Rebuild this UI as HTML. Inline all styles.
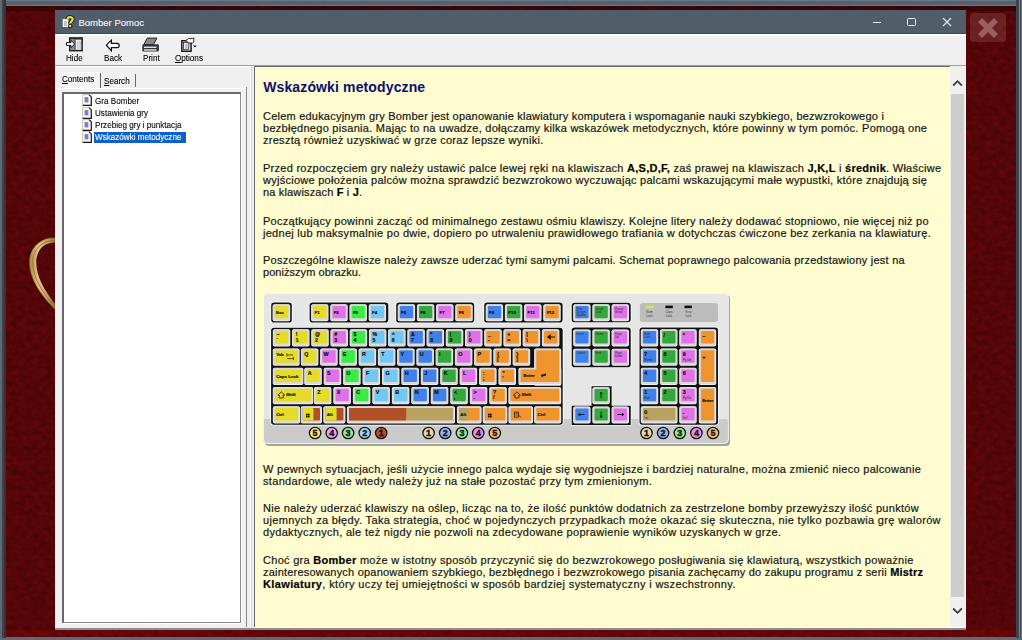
<!DOCTYPE html>
<html><head><meta charset="utf-8">
<style>
*{margin:0;padding:0;box-sizing:border-box}
html,body{width:1022px;height:640px;overflow:hidden;background:#5d6977}
body{position:relative;font-family:"Liberation Sans",sans-serif}
.a{position:absolute}
#frameT{left:0;top:0;width:1022px;height:6px;background:linear-gradient(#6b7785 0,#6b7785 1px,#55616d 1.5px,#55616d 5px,#6a7682 5.5px)}
#frameL{left:0;top:0;width:6px;height:640px;background:linear-gradient(90deg,#5e6a76 0,#5e6a76 2px,#3e4347 2.5px,#3e4347 3.5px,#3a3034 4px,#3a3034 5.5px,#4a0a0e 6px)}
#frameR{left:1016px;top:0;width:6px;height:640px;background:linear-gradient(90deg,#3a434d 0,#3a434d 3px,#7a8692 3px,#7a8692 4px,#3c4650 4px,#3c4650 5px,#6d7884 5px)}
#frameB{left:0;top:637.6px;width:1022px;height:2.4px;background:#5f6a76}
#red{left:6px;top:6px;width:1010px;height:631px;background:#5e0208;overflow:hidden}
#win{left:55px;top:10px;width:911px;height:620px;background:#f0f0f0}
#title{left:0;top:0;width:911px;height:24px;background:linear-gradient(#525d6a 0,#525d6a 22.8px,#3f4955 23.2px,#3f4955 24px);color:#eef2f8;font-size:9.5px}
#tb{left:0;top:24px;width:911px;height:31px;background:linear-gradient(#fafafa 0,#fdfdfd 1.8px,#efefef 2.2px)}
.tbl{font-size:9px;line-height:12px;color:#000;top:18.2px;white-space:pre;-webkit-text-stroke:0.1px;transform:scaleX(0.9);transform-origin:0 0}
#sep{left:0;top:54.5px;width:911px;height:1px;background:#a0a0a0}
#sep2{left:0;top:55.5px;width:911px;height:1px;background:#fff}
#tree{left:7px;top:82px;width:179px;height:531px;background:#fff;border-top:2px solid #696969;border-left:2px solid #696969;border-right:1px solid #8c8c8c;border-bottom:1.3px solid #8c8c8c;box-shadow:1px 1px 0 #fff}
.ti{font-size:9px;line-height:12px;color:#000;white-space:pre;-webkit-text-stroke:0.1px;transform:scaleX(0.9);transform-origin:0 0}
.tab{font-size:9px;line-height:12px;color:#000;white-space:pre;-webkit-text-stroke:0.1px;transform:scaleX(0.9);transform-origin:0 0}
#content{left:199px;top:56px;width:696px;height:560.6px;background:#fffcd0;border-top:1px solid #6a6a6a;border-left:1px solid #6a6a6a}
#sb{left:895.5px;top:56px;width:13px;height:561px;background:#f0f0f0}
#thumb{left:0.5px;top:27.5px;width:12.5px;height:503.5px;background:#cdcdcd}
.p{position:absolute;left:8px;font-size:11px;line-height:12px;color:#161616;white-space:pre;-webkit-text-stroke:0.2px #161616}
.p b{font-weight:bold;color:#000}
</style></head><body>
<div id="frameT" class="a"></div>
<div id="frameL" class="a"></div>
<div id="frameR" class="a"></div>
<div id="frameB" class="a"></div>
<div id="red" class="a">
  <svg class="a" style="left:0;top:0" width="1011" height="631" viewBox="0 0 1011 631">
    <defs><filter id="tex" x="0" y="0" width="100%" height="100%" color-interpolation-filters="sRGB"><feTurbulence type="fractalNoise" baseFrequency="0.15 0.2" numOctaves="3" seed="7"/><feColorMatrix type="matrix" values="0.17 0 0 0 0.245  0.02 0 0 0 0.012  0.02 0 0 0 0.02  0 0 0 0 1"/></filter></defs>
    <rect width="1011" height="631" fill="#5a0508"/>
    <rect width="1011" height="631" fill="#000" filter="url(#tex)"/>
    <rect width="1011" height="5" fill="#000" opacity="0.3"/>
    <rect y="624" width="1011" height="7" fill="#c01018" opacity="0.14"/>
  </svg>
  <svg class="a" style="left:0;top:0" width="60" height="320" viewBox="6 6 60 320">
    <defs><linearGradient id="gold" x1="0" x2="1" y1="0" y2="0"><stop offset="0" stop-color="#a8833e"/><stop offset="0.35" stop-color="#e2c688"/><stop offset="0.7" stop-color="#c9a45a"/><stop offset="1" stop-color="#8f6a2c"/></linearGradient></defs>
    <path d="M55,237.7 C41,237 29,248 29.2,262 C29.5,280 42,296 55,309.5 L55,304 C45,291 36.2,277 36.2,262 C36.5,250 44,242.5 55,242.6 Z" fill="url(#gold)"/>
    <path d="M55,240.3 C42,240 32.6,250 32.7,262 C33,279 43.5,294 55,306.8" fill="none" stroke="#86652e" stroke-width="0.9" opacity="0.8"/><path d="M55,237.9 C41,237.2 29.4,248 29.4,262 C29.7,280 42,296 55,309.3" fill="none" stroke="#6a4a1c" stroke-width="0.6" opacity="0.7"/>
  </svg>
  <div class="a" style="left:964.4px;top:6.7px;width:35.2px;height:29.7px;border-radius:4px;background:rgba(255,215,215,0.13)"></div>
  <svg class="a" style="left:971px;top:11px" width="22" height="22" viewBox="0 0 22 22"><path d="M3 3L19 19M19 3L3 19" stroke="#9c5f5f" stroke-width="5.6" stroke-linecap="butt"/></svg>
</div>

<div id="win" class="a">
  <div id="title" class="a">
    <svg class="a" style="left:6px;top:4px" width="14" height="15" viewBox="0 0 14 15">
      <rect x="1.7" y="4.9" width="5.6" height="8.1" fill="#f6f6f6"/><rect x="3" y="7" width="3" height="5" fill="#c4c4c4"/>
      <path d="M6.6 5.2 C6.6 2.6 11.6 2.4 11.6 5.2 C11.6 7.4 9.2 7.2 9.2 9.4" fill="none" stroke="#111" stroke-width="4"/>
      <path d="M6.6 5.2 C6.6 2.6 11.6 2.4 11.6 5.2 C11.6 7.4 9.2 7.2 9.2 9.4" fill="none" stroke="#e6e03a" stroke-width="2.3"/>
      <circle cx="9.4" cy="12.2" r="2.1" fill="#111"/><circle cx="9.2" cy="12" r="1.25" fill="#e6e03a"/>
    </svg>
    <div class="a" style="left:23.5px;top:7.1px;white-space:pre;-webkit-text-stroke:0.15px #eef2f8">Bomber Pomoc</div>
    <div class="a" style="left:817.5px;top:11.9px;width:8px;height:1.2px;background:#e6ebf0"></div>
    <div class="a" style="left:852px;top:7.7px;width:8.8px;height:8.4px;border:1.2px solid #e6ebf0;border-radius:1.5px"></div>
    <svg class="a" style="left:887px;top:6.5px" width="10" height="10" viewBox="0 0 10 10"><path d="M1 1L9 9M9 1L1 9" stroke="#e6ebf0" stroke-width="1.1"/></svg>
  </div>
  <div id="tb" class="a">
    <svg class="a" style="left:10px;top:2px" width="20" height="17" viewBox="0 0 20 17">
      <rect x="4.8" y="2" width="12.3" height="12.6" fill="#fff" stroke="#1e1e1e" stroke-width="1.6"/>
      <rect x="4.8" y="2" width="12.3" height="1.6" fill="#2a2a2a"/>
      <rect x="5.6" y="3.6" width="4.2" height="10.2" fill="#8a8a8a"/><rect x="9.6" y="3.6" width="1" height="10.2" fill="#222"/>
      <rect x="11.8" y="4.6" width="4.3" height="8.6" fill="#c8c8c8"/><rect x="13.4" y="4.6" width="1" height="8.6" fill="#e8e8e8"/>
      <path d="M1.4 6.6h4.6v-2.3l3.6 3.7-3.6 3.7v-2.3h-4.6z" fill="#fff" stroke="#111" stroke-width="1" stroke-linejoin="miter"/>
    </svg>
    <svg class="a" style="left:50px;top:4.5px" width="16" height="13" viewBox="0 0 16 13">
      <path d="M1.4 6.2L6.4 1.2v3.1h5.6a2.2 2.2 0 0 1 0 4.4h-5.6v3.1z" fill="#fff" stroke="#111" stroke-width="1.2" stroke-linejoin="miter"/>
    </svg>
    <svg class="a" style="left:87px;top:3px" width="18" height="16" viewBox="0 0 18 16">
      <path d="M5.3 1.1h9.6l-3.4 6.4h-9.6z" fill="#8a8a8a" stroke="#222" stroke-width="1"/>
      <path d="M1.5 7.2h14a1.4 1.4 0 0 1 1.4 1.4v4.6a1.4 1.4 0 0 1-1.4 1.4h-14a1.2 1.2 0 0 1-1.2-1.2v-5a1.2 1.2 0 0 1 1.2-1.2z" fill="#333"/>
      <rect x="2" y="9.6" width="12.5" height="1.3" fill="#f4f4f4"/><rect x="2" y="12.3" width="12.5" height="1.3" fill="#f4f4f4"/>
    </svg>
    <svg class="a" style="left:125px;top:2.5px" width="18" height="16" viewBox="0 0 18 16">
      <rect x="1.8" y="3.7" width="9.3" height="10.6" fill="#c8c8c8" stroke="#151515" stroke-width="1.4"/>
      <rect x="3.6" y="5.6" width="4.6" height="7" fill="#fff" stroke="#222" stroke-width="0.7"/>
      <rect x="4.8" y="6.4" width="0.7" height="5.6" fill="#999"/><rect x="6.4" y="6.4" width="0.7" height="5.6" fill="#999"/>
      <path d="M5.6 3.6L8.4 1.6H12.6L13.8 0.8V5L12.4 6H8.8Z" fill="#fff" stroke="#151515" stroke-width="0.9" stroke-linejoin="round"/>
      <path d="M13 8.6h3.8l-1.9 1.9z" fill="#111"/>
    </svg>
    <div class="a tbl" style="left:11.3px">Hide</div>
    <div class="a tbl" style="left:48.8px">Back</div>
    <div class="a tbl" style="left:88.4px">Print</div>
    <div class="a tbl" style="left:120px"><u>O</u>ptions</div>
  </div>
  <div id="sep" class="a"></div>
  <div id="sep2" class="a"></div>
  <div class="a" style="left:6px;top:62px;width:39px;height:16px;background:#f4f4f4;border-top:1px solid #fff"></div>
  <div class="a tab" style="left:7px;top:62.8px"><u>C</u>ontents</div>
  <div class="a" style="left:45px;top:62.6px;width:1.2px;height:15px;background:#5a5a5a"></div>
  <div class="a tab" style="left:49.3px;top:64.6px"><u>S</u>earch</div>
  <div class="a" style="left:79.5px;top:64.4px;width:1.2px;height:12.3px;background:#6a6a6a"></div>
  <div class="a" style="left:2px;top:77.5px;width:190px;height:1px;background:#fff"></div>
  <div class="a" style="left:190.8px;top:77px;width:1.2px;height:540px;background:#8a8a8a"></div>
  <div class="a" style="left:195px;top:56px;width:1px;height:564px;background:#fff"></div>
  <div class="a" style="left:196px;top:56px;width:1px;height:564px;background:#d6d6d6"></div>
  <div class="a" style="left:199px;top:616.6px;width:712px;height:1.2px;background:#fdfdfd"></div>
  <div class="a" style="left:0px;top:617.8px;width:911px;height:2.2px;background:#8a8e94"></div>
  <div id="tree" class="a">
<svg class="a" style="left:18.2px;top:0.10px" width="10" height="12" viewBox="0 0 10 12"><path d="M0.7 0.6h6.3l2.3 2.3v8.5h-8.6z" fill="#fcfcf4" stroke="#c9c7a4" stroke-width="1"/><path d="M7 0.6l2.3 2.3v8.5h-8.6" fill="none" stroke="#1a1a1a" stroke-width="1.2"/><rect x="2.6" y="3.1" width="3.8" height="5.3" fill="#7b78e6"/></svg>
<svg class="a" style="left:18.2px;top:12.50px" width="10" height="12" viewBox="0 0 10 12"><path d="M0.7 0.6h6.3l2.3 2.3v8.5h-8.6z" fill="#fcfcf4" stroke="#c9c7a4" stroke-width="1"/><path d="M7 0.6l2.3 2.3v8.5h-8.6" fill="none" stroke="#1a1a1a" stroke-width="1.2"/><rect x="2.6" y="3.1" width="3.8" height="5.3" fill="#7b78e6"/></svg>
<svg class="a" style="left:18.2px;top:24.90px" width="10" height="12" viewBox="0 0 10 12"><path d="M0.7 0.6h6.3l2.3 2.3v8.5h-8.6z" fill="#fcfcf4" stroke="#c9c7a4" stroke-width="1"/><path d="M7 0.6l2.3 2.3v8.5h-8.6" fill="none" stroke="#1a1a1a" stroke-width="1.2"/><rect x="2.6" y="3.1" width="3.8" height="5.3" fill="#7b78e6"/></svg>
<svg class="a" style="left:18.2px;top:37.30px" width="10" height="12" viewBox="0 0 10 12"><path d="M0.7 0.6h6.3l2.3 2.3v8.5h-8.6z" fill="#fcfcf4" stroke="#c9c7a4" stroke-width="1"/><path d="M7 0.6l2.3 2.3v8.5h-8.6" fill="none" stroke="#1a1a1a" stroke-width="1.2"/><rect x="2.6" y="3.1" width="3.8" height="5.3" fill="#7b78e6"/></svg>
    <div class="a ti" style="left:31px;top:0.5px">Gra Bomber</div>
    <div class="a ti" style="left:31px;top:12.9px">Ustawienia gry</div>
    <div class="a ti" style="left:31px;top:25.3px">Przebieg gry i punktacja</div>
    <div class="a" style="left:30.4px;top:37.7px;height:11.7px;width:92.1px;background:#0c60c8"></div><div class="a ti" style="left:31px;top:37.7px;line-height:11.7px;color:#fff">Wskazówki metodyczne</div>
  </div>
  <div id="content" class="a">
<div class="a" style="left:8.2px;top:12px;font-size:14px;font-weight:bold;color:#0d0d6e;letter-spacing:0.13px;white-space:pre">Wskazówki metodyczne</div>
<div class="p" style="top:43.39px;letter-spacing:0.217px">Celem edukacyjnym gry Bomber jest opanowanie klawiatury komputera i wspomaganie nauki szybkiego, bezwzrokowego i</div>
<div class="p" style="top:55.24px;letter-spacing:0.276px">bezbłędnego pisania. Mając to na uwadze, dołączamy kilka wskazówek metodycznych, które powinny w tym pomóc. Pomogą one</div>
<div class="p" style="top:67.09px;letter-spacing:0.275px">zresztą również uzyskiwać w grze coraz lepsze wyniki.</div>
<div class="p" style="top:95.39px;letter-spacing:0.270px">Przed rozpoczęciem gry należy ustawić palce lewej ręki na klawiszach <b>A,S,D,F,</b> zaś prawej na klawiszach <b>J,K,L</b> i <b>średnik</b>. Właściwe</div>
<div class="p" style="top:107.39px;letter-spacing:0.267px">wyjściowe położenia palców można sprawdzić bezwzrokowo wyczuwając palcami wskazującymi małe wypustki, które znajdują się</div>
<div class="p" style="top:119.39px;letter-spacing:0.156px">na klawiszach <b>F</b> i <b>J</b>.</div>
<div class="p" style="top:147.79px;letter-spacing:0.266px">Początkujący powinni zacząć od minimalnego zestawu ośmiu klawiszy. Kolejne litery należy dodawać stopniowo, nie więcej niż po</div>
<div class="p" style="top:159.79px;letter-spacing:0.279px">jednej lub maksymalnie po dwie, dopiero po utrwaleniu prawidłowego trafiania w dotychczas ćwiczone bez zerkania na klawiaturę.</div>
<div class="p" style="top:187.19px;letter-spacing:0.231px">Poszczególne klawisze należy zawsze uderzać tymi samymi palcami. Schemat poprawnego palcowania przedstawiony jest na</div>
<div class="p" style="top:199.19px;letter-spacing:0.046px">poniższym obrazku.</div>
<div class="p" style="top:395.99px;letter-spacing:0.283px">W pewnych sytuacjach, jeśli użycie innego palca wydaje się wygodniejsze i bardziej naturalne, można zmienić nieco palcowanie</div>
<div class="p" style="top:407.99px;letter-spacing:0.326px">standardowe, ale wtedy należy już na stałe pozostać przy tym zmienionym.</div>
<div class="p" style="top:434.89px;letter-spacing:0.290px">Nie należy uderzać klawiszy na oślep, licząc na to, że ilość punktów dodatnich za zestrzelone bomby przewyższy ilość punktów</div>
<div class="p" style="top:446.89px;letter-spacing:0.337px">ujemnych za błędy. Taka strategia, choć w pojedynczych przypadkach może okazać się skuteczna, nie tylko pozbawia grę walorów</div>
<div class="p" style="top:458.89px;letter-spacing:0.311px">dydaktycznych, ale też nigdy nie pozwoli na zdecydowane poprawienie wyników uzyskanych w grze.</div>
<div class="p" style="top:487.39px;letter-spacing:0.286px">Choć gra <b>Bomber</b> może w istotny sposób przyczynić się do bezwzrokowego posługiwania się klawiaturą, wszystkich poważnie</div>
<div class="p" style="top:499.39px;letter-spacing:0.209px">zainteresowanych opanowaniem szybkiego, bezbłędnego i bezwzrokowego pisania zachęcamy do zakupu programu z serii <b>Mistrz</b></div>
<div class="p" style="top:511.39px;letter-spacing:0.371px"><b>Klawiatury</b>, który uczy tej umiejętności w sposób bardziej systematyczny i wszechstronny.</div>
<svg class="a" style="left:8px;top:226px;font-family:'Liberation Sans',sans-serif" width="472" height="156" viewBox="263 293 472 156">
<rect x="265" y="295" width="465" height="151" rx="4" fill="#a2a2a2"/>
<rect x="263.4" y="293.4" width="465" height="150" rx="4" fill="#e6e6e6"/>
<rect x="263.4" y="419" width="465" height="24.4" rx="3" fill="#cbcbcb"/>
<rect x="263.4" y="293.4" width="465" height="150" rx="4" fill="none" stroke="#fafafa" stroke-width="0.8"/>
<rect x="270.4" y="301.8" width="22.200000000000024" height="21.49999999999998" rx="3.5" fill="#fff"/>
<rect x="271.2" y="302.6" width="20.600000000000023" height="19.899999999999977" rx="2.8" fill="#111"/>
<rect x="308.8" y="301.8" width="80.29999999999998" height="21.49999999999998" rx="3.5" fill="#fff"/>
<rect x="309.6" y="302.6" width="78.69999999999999" height="19.899999999999977" rx="2.8" fill="#111"/>
<rect x="395.4" y="301.8" width="79.6" height="21.49999999999998" rx="3.5" fill="#fff"/>
<rect x="396.2" y="302.6" width="78.0" height="19.899999999999977" rx="2.8" fill="#111"/>
<rect x="483.4" y="301.8" width="80.00000000000003" height="21.49999999999998" rx="3.5" fill="#fff"/>
<rect x="484.2" y="302.6" width="78.40000000000003" height="19.899999999999977" rx="2.8" fill="#111"/>
<rect x="570.9000000000001" y="302.0" width="60.6" height="21.1" rx="3.5" fill="#fff"/>
<rect x="571.7" y="302.8" width="59.0" height="19.5" rx="2.8" fill="#111"/>
<rect x="270.3" y="327.0" width="293.20000000000005" height="98.6" rx="3.5" fill="#fff"/>
<rect x="271.1" y="327.8" width="291.6" height="97.0" rx="2.8" fill="#111"/>
<rect x="570.9000000000001" y="326.8" width="60.6" height="41.19999999999997" rx="3.5" fill="#fff"/>
<rect x="571.7" y="327.6" width="59.0" height="39.599999999999966" rx="2.8" fill="#111"/>
<rect x="638.7" y="326.8" width="80.1" height="98.79999999999998" rx="3.5" fill="#fff"/>
<rect x="639.5" y="327.6" width="78.5" height="97.19999999999999" rx="2.8" fill="#111"/>
<path d="M590.8 385.5h21.6v19.5h19.1v20.7h-60.6v-20.7h19.9z" fill="#fff"/>
<path d="M591.6 386.3h20v19.5h19.1v19.1h-59v-19.1h19.9z" fill="#111" stroke="#111" stroke-width="0.1" stroke-linejoin="round"/>
<rect x="639.8" y="303" width="78.2" height="19.1" rx="3" fill="#bdbdbd"/>
<rect x="645.6" y="305.6" width="7.8" height="2.6" fill="#d2ee3c"/><rect x="665.4" y="305.6" width="7.4" height="2.6" fill="#111"/><rect x="684.5" y="305.6" width="7.4" height="2.6" fill="#111"/>
<text x="649.5" y="313.2" font-size="3" text-anchor="middle" fill="#333">Num</text><text x="649.5" y="316.8" font-size="3" text-anchor="middle" fill="#333">Lock</text>
<text x="668.9" y="313.2" font-size="3" text-anchor="middle" fill="#333">Caps</text><text x="668.9" y="316.8" font-size="3" text-anchor="middle" fill="#333">Lock</text>
<text x="688.3" y="313.2" font-size="3" text-anchor="middle" fill="#333">Scro</text><text x="688.3" y="316.8" font-size="3" text-anchor="middle" fill="#333">Lock</text>
<rect x="272.60" y="304.30" width="17.60" height="16.90" rx="1.8" fill="#f4f4f4"/>
<rect x="272.90" y="304.50" width="16.70" height="15.90" rx="1.6" fill="#d9d9d9"/>
<rect x="274.70" y="306.10" width="13.50" height="12.10" rx="1" fill="#e5dc28"/>
<text x="276.00" y="314.30" font-size="4.4" font-weight="bold" fill="#151515" stroke="#151515" stroke-width="0.2">Esc</text>
<rect x="311.10" y="304.30" width="17.40" height="16.90" rx="1.8" fill="#f4f4f4"/>
<rect x="311.40" y="304.50" width="16.50" height="15.90" rx="1.6" fill="#d9d9d9"/>
<rect x="313.20" y="306.10" width="13.30" height="12.10" rx="1" fill="#e5dc28"/>
<text x="314.50" y="314.30" font-size="4.4" font-weight="bold" fill="#151515" stroke="#151515" stroke-width="0.2">F1</text>
<rect x="330.30" y="304.30" width="17.40" height="16.90" rx="1.8" fill="#f4f4f4"/>
<rect x="330.60" y="304.50" width="16.50" height="15.90" rx="1.6" fill="#d9d9d9"/>
<rect x="332.40" y="306.10" width="13.30" height="12.10" rx="1" fill="#e271e9"/>
<text x="333.70" y="314.30" font-size="4.4" font-weight="bold" fill="#151515" stroke="#151515" stroke-width="0.2">F2</text>
<rect x="349.50" y="304.30" width="17.40" height="16.90" rx="1.8" fill="#f4f4f4"/>
<rect x="349.80" y="304.50" width="16.50" height="15.90" rx="1.6" fill="#d9d9d9"/>
<rect x="351.60" y="306.10" width="13.30" height="12.10" rx="1" fill="#38ec44"/>
<text x="352.90" y="314.30" font-size="4.4" font-weight="bold" fill="#151515" stroke="#151515" stroke-width="0.2">F3</text>
<rect x="368.70" y="304.30" width="17.40" height="16.90" rx="1.8" fill="#f4f4f4"/>
<rect x="369.00" y="304.50" width="16.50" height="15.90" rx="1.6" fill="#d9d9d9"/>
<rect x="370.80" y="306.10" width="13.30" height="12.10" rx="1" fill="#72c8f2"/>
<text x="372.10" y="314.30" font-size="4.4" font-weight="bold" fill="#151515" stroke="#151515" stroke-width="0.2">F4</text>
<rect x="397.70" y="304.30" width="17.40" height="16.90" rx="1.8" fill="#f4f4f4"/>
<rect x="398.00" y="304.50" width="16.50" height="15.90" rx="1.6" fill="#d9d9d9"/>
<rect x="399.80" y="306.10" width="13.30" height="12.10" rx="1" fill="#4080ea"/>
<text x="401.10" y="314.30" font-size="4.4" font-weight="bold" fill="#151515" stroke="#151515" stroke-width="0.2">F5</text>
<rect x="416.90" y="304.30" width="17.40" height="16.90" rx="1.8" fill="#f4f4f4"/>
<rect x="417.20" y="304.50" width="16.50" height="15.90" rx="1.6" fill="#d9d9d9"/>
<rect x="419.00" y="306.10" width="13.30" height="12.10" rx="1" fill="#33a93b"/>
<text x="420.30" y="314.30" font-size="4.4" font-weight="bold" fill="#151515" stroke="#151515" stroke-width="0.2">F6</text>
<rect x="436.10" y="304.30" width="17.40" height="16.90" rx="1.8" fill="#f4f4f4"/>
<rect x="436.40" y="304.50" width="16.50" height="15.90" rx="1.6" fill="#d9d9d9"/>
<rect x="438.20" y="306.10" width="13.30" height="12.10" rx="1" fill="#e271e9"/>
<text x="439.50" y="314.30" font-size="4.4" font-weight="bold" fill="#151515" stroke="#151515" stroke-width="0.2">F7</text>
<rect x="455.30" y="304.30" width="17.40" height="16.90" rx="1.8" fill="#f4f4f4"/>
<rect x="455.60" y="304.50" width="16.50" height="15.90" rx="1.6" fill="#d9d9d9"/>
<rect x="457.40" y="306.10" width="13.30" height="12.10" rx="1" fill="#f0952e"/>
<text x="458.70" y="314.30" font-size="4.4" font-weight="bold" fill="#151515" stroke="#151515" stroke-width="0.2">F8</text>
<rect x="485.70" y="304.30" width="17.40" height="16.90" rx="1.8" fill="#f4f4f4"/>
<rect x="486.00" y="304.50" width="16.50" height="15.90" rx="1.6" fill="#d9d9d9"/>
<rect x="487.80" y="306.10" width="13.30" height="12.10" rx="1" fill="#4080ea"/>
<text x="489.10" y="314.30" font-size="4.4" font-weight="bold" fill="#151515" stroke="#151515" stroke-width="0.2">F9</text>
<rect x="504.90" y="304.30" width="17.40" height="16.90" rx="1.8" fill="#f4f4f4"/>
<rect x="505.20" y="304.50" width="16.50" height="15.90" rx="1.6" fill="#d9d9d9"/>
<rect x="507.00" y="306.10" width="13.30" height="12.10" rx="1" fill="#33a93b"/>
<text x="508.30" y="314.30" font-size="4.4" font-weight="bold" fill="#151515" stroke="#151515" stroke-width="0.2">F10</text>
<rect x="524.10" y="304.30" width="17.40" height="16.90" rx="1.8" fill="#f4f4f4"/>
<rect x="524.40" y="304.50" width="16.50" height="15.90" rx="1.6" fill="#d9d9d9"/>
<rect x="526.20" y="306.10" width="13.30" height="12.10" rx="1" fill="#e271e9"/>
<text x="527.50" y="314.30" font-size="4.4" font-weight="bold" fill="#151515" stroke="#151515" stroke-width="0.2">F11</text>
<rect x="543.30" y="304.30" width="17.40" height="16.90" rx="1.8" fill="#f4f4f4"/>
<rect x="543.60" y="304.50" width="16.50" height="15.90" rx="1.6" fill="#d9d9d9"/>
<rect x="545.40" y="306.10" width="13.30" height="12.10" rx="1" fill="#f0952e"/>
<text x="546.70" y="314.30" font-size="4.4" font-weight="bold" fill="#151515" stroke="#151515" stroke-width="0.2">F12</text>
<rect x="573.20" y="304.30" width="17.40" height="16.90" rx="1.8" fill="#f4f4f4"/>
<rect x="573.50" y="304.50" width="16.50" height="15.90" rx="1.6" fill="#d9d9d9"/>
<rect x="575.30" y="306.10" width="13.30" height="12.10" rx="1" fill="#4080ea"/>
<text x="576.50" y="309.70" font-size="3" fill="#2a2a2a">Print</text>
<text x="576.50" y="312.90" font-size="3" fill="#2a2a2a">Screen</text>
<text x="576.50" y="316.10" font-size="3" fill="#2a2a2a">SysRq</text>
<rect x="592.40" y="304.30" width="17.40" height="16.90" rx="1.8" fill="#f4f4f4"/>
<rect x="592.70" y="304.50" width="16.50" height="15.90" rx="1.6" fill="#d9d9d9"/>
<rect x="594.50" y="306.10" width="13.30" height="12.10" rx="1" fill="#33a93b"/>
<text x="595.70" y="309.70" font-size="3" fill="#2a2a2a">Scroll</text>
<text x="595.70" y="312.90" font-size="3" fill="#2a2a2a">Lock</text>
<rect x="611.60" y="304.30" width="17.40" height="16.90" rx="1.8" fill="#f4f4f4"/>
<rect x="611.90" y="304.50" width="16.50" height="15.90" rx="1.6" fill="#d9d9d9"/>
<rect x="613.70" y="306.10" width="13.30" height="12.10" rx="1" fill="#e271e9"/>
<text x="614.90" y="309.70" font-size="3" fill="#2a2a2a">Pause</text>
<text x="614.90" y="312.90" font-size="3" fill="#2a2a2a">Break</text>
<rect x="272.80" y="329.20" width="17.50" height="17.30" rx="1.8" fill="#f4f4f4"/>
<rect x="273.10" y="329.40" width="16.60" height="16.30" rx="1.6" fill="#d9d9d9"/>
<rect x="274.90" y="331.00" width="13.40" height="12.50" rx="1" fill="#e5dc28"/>
<text x="276.50" y="336.20" font-size="5.2" font-weight="bold" fill="#151515" stroke="#151515" stroke-width="0.2">~</text>
<text x="276.50" y="341.60" font-size="5.2" font-weight="bold" fill="#151515" stroke="#151515" stroke-width="0.2">`</text>
<rect x="292.02" y="329.20" width="17.50" height="17.30" rx="1.8" fill="#f4f4f4"/>
<rect x="292.32" y="329.40" width="16.60" height="16.30" rx="1.6" fill="#d9d9d9"/>
<rect x="294.12" y="331.00" width="13.40" height="12.50" rx="1" fill="#e5dc28"/>
<text x="295.72" y="336.20" font-size="5.2" font-weight="bold" fill="#151515" stroke="#151515" stroke-width="0.2">!</text>
<text x="295.72" y="341.60" font-size="5.2" font-weight="bold" fill="#151515" stroke="#151515" stroke-width="0.2">1</text>
<rect x="311.24" y="329.20" width="17.50" height="17.30" rx="1.8" fill="#f4f4f4"/>
<rect x="311.54" y="329.40" width="16.60" height="16.30" rx="1.6" fill="#d9d9d9"/>
<rect x="313.34" y="331.00" width="13.40" height="12.50" rx="1" fill="#e5dc28"/>
<text x="314.94" y="336.20" font-size="5.2" font-weight="bold" fill="#151515" stroke="#151515" stroke-width="0.2">@</text>
<text x="314.94" y="341.60" font-size="5.2" font-weight="bold" fill="#151515" stroke="#151515" stroke-width="0.2">2</text>
<rect x="330.46" y="329.20" width="17.50" height="17.30" rx="1.8" fill="#f4f4f4"/>
<rect x="330.76" y="329.40" width="16.60" height="16.30" rx="1.6" fill="#d9d9d9"/>
<rect x="332.56" y="331.00" width="13.40" height="12.50" rx="1" fill="#e271e9"/>
<text x="334.16" y="336.20" font-size="5.2" font-weight="bold" fill="#151515" stroke="#151515" stroke-width="0.2">#</text>
<text x="334.16" y="341.60" font-size="5.2" font-weight="bold" fill="#151515" stroke="#151515" stroke-width="0.2">3</text>
<rect x="349.68" y="329.20" width="17.50" height="17.30" rx="1.8" fill="#f4f4f4"/>
<rect x="349.98" y="329.40" width="16.60" height="16.30" rx="1.6" fill="#d9d9d9"/>
<rect x="351.78" y="331.00" width="13.40" height="12.50" rx="1" fill="#38ec44"/>
<text x="353.38" y="336.20" font-size="5.2" font-weight="bold" fill="#151515" stroke="#151515" stroke-width="0.2">$</text>
<text x="353.38" y="341.60" font-size="5.2" font-weight="bold" fill="#151515" stroke="#151515" stroke-width="0.2">4</text>
<rect x="368.90" y="329.20" width="17.50" height="17.30" rx="1.8" fill="#f4f4f4"/>
<rect x="369.20" y="329.40" width="16.60" height="16.30" rx="1.6" fill="#d9d9d9"/>
<rect x="371.00" y="331.00" width="13.40" height="12.50" rx="1" fill="#72c8f2"/>
<text x="372.60" y="336.20" font-size="5.2" font-weight="bold" fill="#151515" stroke="#151515" stroke-width="0.2">%</text>
<text x="372.60" y="341.60" font-size="5.2" font-weight="bold" fill="#151515" stroke="#151515" stroke-width="0.2">5</text>
<rect x="388.12" y="329.20" width="17.50" height="17.30" rx="1.8" fill="#f4f4f4"/>
<rect x="388.42" y="329.40" width="16.60" height="16.30" rx="1.6" fill="#d9d9d9"/>
<rect x="390.22" y="331.00" width="13.40" height="12.50" rx="1" fill="#72c8f2"/>
<text x="391.82" y="336.20" font-size="5.2" font-weight="bold" fill="#151515" stroke="#151515" stroke-width="0.2">^</text>
<text x="391.82" y="341.60" font-size="5.2" font-weight="bold" fill="#151515" stroke="#151515" stroke-width="0.2">6</text>
<rect x="407.34" y="329.20" width="17.50" height="17.30" rx="1.8" fill="#f4f4f4"/>
<rect x="407.64" y="329.40" width="16.60" height="16.30" rx="1.6" fill="#d9d9d9"/>
<rect x="409.44" y="331.00" width="13.40" height="12.50" rx="1" fill="#4080ea"/>
<text x="411.04" y="336.20" font-size="5.2" font-weight="bold" fill="#151515" stroke="#151515" stroke-width="0.2">&amp;</text>
<text x="411.04" y="341.60" font-size="5.2" font-weight="bold" fill="#151515" stroke="#151515" stroke-width="0.2">7</text>
<rect x="426.56" y="329.20" width="17.50" height="17.30" rx="1.8" fill="#f4f4f4"/>
<rect x="426.86" y="329.40" width="16.60" height="16.30" rx="1.6" fill="#d9d9d9"/>
<rect x="428.66" y="331.00" width="13.40" height="12.50" rx="1" fill="#4080ea"/>
<text x="430.26" y="336.20" font-size="5.2" font-weight="bold" fill="#151515" stroke="#151515" stroke-width="0.2">*</text>
<text x="430.26" y="341.60" font-size="5.2" font-weight="bold" fill="#151515" stroke="#151515" stroke-width="0.2">8</text>
<rect x="445.78" y="329.20" width="17.50" height="17.30" rx="1.8" fill="#f4f4f4"/>
<rect x="446.08" y="329.40" width="16.60" height="16.30" rx="1.6" fill="#d9d9d9"/>
<rect x="447.88" y="331.00" width="13.40" height="12.50" rx="1" fill="#33a93b"/>
<text x="449.48" y="336.20" font-size="5.2" font-weight="bold" fill="#151515" stroke="#151515" stroke-width="0.2">(</text>
<text x="449.48" y="341.60" font-size="5.2" font-weight="bold" fill="#151515" stroke="#151515" stroke-width="0.2">9</text>
<rect x="465.00" y="329.20" width="17.50" height="17.30" rx="1.8" fill="#f4f4f4"/>
<rect x="465.30" y="329.40" width="16.60" height="16.30" rx="1.6" fill="#d9d9d9"/>
<rect x="467.10" y="331.00" width="13.40" height="12.50" rx="1" fill="#e271e9"/>
<text x="468.70" y="336.20" font-size="5.2" font-weight="bold" fill="#151515" stroke="#151515" stroke-width="0.2">)</text>
<text x="468.70" y="341.60" font-size="5.2" font-weight="bold" fill="#151515" stroke="#151515" stroke-width="0.2">0</text>
<rect x="484.22" y="329.20" width="17.50" height="17.30" rx="1.8" fill="#f4f4f4"/>
<rect x="484.52" y="329.40" width="16.60" height="16.30" rx="1.6" fill="#d9d9d9"/>
<rect x="486.32" y="331.00" width="13.40" height="12.50" rx="1" fill="#f0952e"/>
<text x="487.92" y="336.20" font-size="5.2" font-weight="bold" fill="#151515" stroke="#151515" stroke-width="0.2">_</text>
<text x="487.92" y="341.60" font-size="5.2" font-weight="bold" fill="#151515" stroke="#151515" stroke-width="0.2">-</text>
<rect x="503.44" y="329.20" width="17.50" height="17.30" rx="1.8" fill="#f4f4f4"/>
<rect x="503.74" y="329.40" width="16.60" height="16.30" rx="1.6" fill="#d9d9d9"/>
<rect x="505.54" y="331.00" width="13.40" height="12.50" rx="1" fill="#f0952e"/>
<text x="507.14" y="336.20" font-size="5.2" font-weight="bold" fill="#151515" stroke="#151515" stroke-width="0.2">+</text>
<text x="507.14" y="341.60" font-size="5.2" font-weight="bold" fill="#151515" stroke="#151515" stroke-width="0.2">=</text>
<rect x="522.66" y="329.20" width="17.50" height="17.30" rx="1.8" fill="#f4f4f4"/>
<rect x="522.96" y="329.40" width="16.60" height="16.30" rx="1.6" fill="#d9d9d9"/>
<rect x="524.76" y="331.00" width="13.40" height="12.50" rx="1" fill="#f0952e"/>
<text x="526.36" y="336.20" font-size="5.2" font-weight="bold" fill="#151515" stroke="#151515" stroke-width="0.2">|</text>
<text x="526.36" y="341.60" font-size="5.2" font-weight="bold" fill="#151515" stroke="#151515" stroke-width="0.2">\</text>
<rect x="541.88" y="329.20" width="17.50" height="17.30" rx="1.8" fill="#f4f4f4"/>
<rect x="542.18" y="329.40" width="16.60" height="16.30" rx="1.6" fill="#d9d9d9"/>
<rect x="543.98" y="331.00" width="13.40" height="12.50" rx="1" fill="#f0952e"/>
<path d="M547.98 337.00h7M547.98 337.00l2.2-1.8v3.6z" stroke="#151515" stroke-width="1.1" fill="#151515"/>
<rect x="272.80" y="348.50" width="26.80" height="17.30" rx="1.8" fill="#f4f4f4"/>
<rect x="273.10" y="348.70" width="25.90" height="16.30" rx="1.6" fill="#d9d9d9"/>
<rect x="274.90" y="350.30" width="22.70" height="12.50" rx="1" fill="#e5dc28"/>
<text x="276.20" y="355.90" font-size="4.4" font-weight="bold" fill="#151515" stroke="#151515" stroke-width="0.2">Tab</text>
<path d="M286.90 353.50v3M287.20 355.00h6M293.50 357.10v3M287.20 358.60h6" stroke="#151515" stroke-width="0.7"/>
<rect x="300.90" y="348.50" width="17.50" height="17.30" rx="1.8" fill="#f4f4f4"/>
<rect x="301.20" y="348.70" width="16.60" height="16.30" rx="1.6" fill="#d9d9d9"/>
<rect x="303.00" y="350.30" width="13.40" height="12.50" rx="1" fill="#e5dc28"/>
<text x="304.30" y="355.90" font-size="5.4" font-weight="bold" fill="#151515" stroke="#151515" stroke-width="0.2">Q</text>
<rect x="320.15" y="348.50" width="17.50" height="17.30" rx="1.8" fill="#f4f4f4"/>
<rect x="320.45" y="348.70" width="16.60" height="16.30" rx="1.6" fill="#d9d9d9"/>
<rect x="322.25" y="350.30" width="13.40" height="12.50" rx="1" fill="#e271e9"/>
<text x="323.55" y="355.90" font-size="5.4" font-weight="bold" fill="#151515" stroke="#151515" stroke-width="0.2">W</text>
<rect x="339.40" y="348.50" width="17.50" height="17.30" rx="1.8" fill="#f4f4f4"/>
<rect x="339.70" y="348.70" width="16.60" height="16.30" rx="1.6" fill="#d9d9d9"/>
<rect x="341.50" y="350.30" width="13.40" height="12.50" rx="1" fill="#38ec44"/>
<text x="342.80" y="355.90" font-size="5.4" font-weight="bold" fill="#151515" stroke="#151515" stroke-width="0.2">E</text>
<rect x="358.65" y="348.50" width="17.50" height="17.30" rx="1.8" fill="#f4f4f4"/>
<rect x="358.95" y="348.70" width="16.60" height="16.30" rx="1.6" fill="#d9d9d9"/>
<rect x="360.75" y="350.30" width="13.40" height="12.50" rx="1" fill="#72c8f2"/>
<text x="362.05" y="355.90" font-size="5.4" font-weight="bold" fill="#151515" stroke="#151515" stroke-width="0.2">R</text>
<rect x="377.90" y="348.50" width="17.50" height="17.30" rx="1.8" fill="#f4f4f4"/>
<rect x="378.20" y="348.70" width="16.60" height="16.30" rx="1.6" fill="#d9d9d9"/>
<rect x="380.00" y="350.30" width="13.40" height="12.50" rx="1" fill="#72c8f2"/>
<text x="381.30" y="355.90" font-size="5.4" font-weight="bold" fill="#151515" stroke="#151515" stroke-width="0.2">T</text>
<rect x="397.15" y="348.50" width="17.50" height="17.30" rx="1.8" fill="#f4f4f4"/>
<rect x="397.45" y="348.70" width="16.60" height="16.30" rx="1.6" fill="#d9d9d9"/>
<rect x="399.25" y="350.30" width="13.40" height="12.50" rx="1" fill="#4080ea"/>
<text x="400.55" y="355.90" font-size="5.4" font-weight="bold" fill="#151515" stroke="#151515" stroke-width="0.2">Y</text>
<rect x="416.40" y="348.50" width="17.50" height="17.30" rx="1.8" fill="#f4f4f4"/>
<rect x="416.70" y="348.70" width="16.60" height="16.30" rx="1.6" fill="#d9d9d9"/>
<rect x="418.50" y="350.30" width="13.40" height="12.50" rx="1" fill="#4080ea"/>
<text x="419.80" y="355.90" font-size="5.4" font-weight="bold" fill="#151515" stroke="#151515" stroke-width="0.2">U</text>
<rect x="435.65" y="348.50" width="17.50" height="17.30" rx="1.8" fill="#f4f4f4"/>
<rect x="435.95" y="348.70" width="16.60" height="16.30" rx="1.6" fill="#d9d9d9"/>
<rect x="437.75" y="350.30" width="13.40" height="12.50" rx="1" fill="#33a93b"/>
<text x="439.05" y="355.90" font-size="5.4" font-weight="bold" fill="#151515" stroke="#151515" stroke-width="0.2">I</text>
<rect x="454.90" y="348.50" width="17.50" height="17.30" rx="1.8" fill="#f4f4f4"/>
<rect x="455.20" y="348.70" width="16.60" height="16.30" rx="1.6" fill="#d9d9d9"/>
<rect x="457.00" y="350.30" width="13.40" height="12.50" rx="1" fill="#e271e9"/>
<text x="458.30" y="355.90" font-size="5.4" font-weight="bold" fill="#151515" stroke="#151515" stroke-width="0.2">O</text>
<rect x="474.15" y="348.50" width="17.50" height="17.30" rx="1.8" fill="#f4f4f4"/>
<rect x="474.45" y="348.70" width="16.60" height="16.30" rx="1.6" fill="#d9d9d9"/>
<rect x="476.25" y="350.30" width="13.40" height="12.50" rx="1" fill="#f0952e"/>
<text x="477.55" y="355.90" font-size="5.4" font-weight="bold" fill="#151515" stroke="#151515" stroke-width="0.2">P</text>
<rect x="493.40" y="348.50" width="17.50" height="17.30" rx="1.8" fill="#f4f4f4"/>
<rect x="493.70" y="348.70" width="16.60" height="16.30" rx="1.6" fill="#d9d9d9"/>
<rect x="495.50" y="350.30" width="13.40" height="12.50" rx="1" fill="#f0952e"/>
<text x="497.10" y="355.50" font-size="5.2" font-weight="bold" fill="#151515" stroke="#151515" stroke-width="0.2">{</text>
<text x="497.10" y="360.90" font-size="5.2" font-weight="bold" fill="#151515" stroke="#151515" stroke-width="0.2">[</text>
<rect x="512.65" y="348.50" width="17.50" height="17.30" rx="1.8" fill="#f4f4f4"/>
<rect x="512.95" y="348.70" width="16.60" height="16.30" rx="1.6" fill="#d9d9d9"/>
<rect x="514.75" y="350.30" width="13.40" height="12.50" rx="1" fill="#f0952e"/>
<text x="516.35" y="355.50" font-size="5.2" font-weight="bold" fill="#151515" stroke="#151515" stroke-width="0.2">}</text>
<text x="516.35" y="360.90" font-size="5.2" font-weight="bold" fill="#151515" stroke="#151515" stroke-width="0.2">]</text>
<rect x="272.80" y="367.80" width="30.60" height="17.30" rx="1.8" fill="#f4f4f4"/>
<rect x="273.10" y="368.00" width="29.70" height="16.30" rx="1.6" fill="#d9d9d9"/>
<rect x="274.90" y="369.60" width="26.50" height="12.50" rx="1" fill="#e5dc28"/>
<text x="276.20" y="377.60" font-size="4.4" font-weight="bold" fill="#151515" stroke="#151515" stroke-width="0.2">Caps Lock</text>
<rect x="304.30" y="367.80" width="17.50" height="17.30" rx="1.8" fill="#f4f4f4"/>
<rect x="304.60" y="368.00" width="16.60" height="16.30" rx="1.6" fill="#d9d9d9"/>
<rect x="306.40" y="369.60" width="13.40" height="12.50" rx="1" fill="#e5dc28"/>
<text x="307.70" y="375.20" font-size="5.4" font-weight="bold" fill="#151515" stroke="#151515" stroke-width="0.2">A</text>
<rect x="323.72" y="367.80" width="17.50" height="17.30" rx="1.8" fill="#f4f4f4"/>
<rect x="324.02" y="368.00" width="16.60" height="16.30" rx="1.6" fill="#d9d9d9"/>
<rect x="325.82" y="369.60" width="13.40" height="12.50" rx="1" fill="#e271e9"/>
<text x="327.12" y="375.20" font-size="5.4" font-weight="bold" fill="#151515" stroke="#151515" stroke-width="0.2">S</text>
<rect x="343.14" y="367.80" width="17.50" height="17.30" rx="1.8" fill="#f4f4f4"/>
<rect x="343.44" y="368.00" width="16.60" height="16.30" rx="1.6" fill="#d9d9d9"/>
<rect x="345.24" y="369.60" width="13.40" height="12.50" rx="1" fill="#38ec44"/>
<text x="346.54" y="375.20" font-size="5.4" font-weight="bold" fill="#151515" stroke="#151515" stroke-width="0.2">D</text>
<rect x="362.56" y="367.80" width="17.50" height="17.30" rx="1.8" fill="#f4f4f4"/>
<rect x="362.86" y="368.00" width="16.60" height="16.30" rx="1.6" fill="#d9d9d9"/>
<rect x="364.66" y="369.60" width="13.40" height="12.50" rx="1" fill="#72c8f2"/>
<text x="365.96" y="375.20" font-size="5.4" font-weight="bold" fill="#151515" stroke="#151515" stroke-width="0.2">F</text>
<rect x="381.98" y="367.80" width="17.50" height="17.30" rx="1.8" fill="#f4f4f4"/>
<rect x="382.28" y="368.00" width="16.60" height="16.30" rx="1.6" fill="#d9d9d9"/>
<rect x="384.08" y="369.60" width="13.40" height="12.50" rx="1" fill="#72c8f2"/>
<text x="385.38" y="375.20" font-size="5.4" font-weight="bold" fill="#151515" stroke="#151515" stroke-width="0.2">G</text>
<rect x="401.40" y="367.80" width="17.50" height="17.30" rx="1.8" fill="#f4f4f4"/>
<rect x="401.70" y="368.00" width="16.60" height="16.30" rx="1.6" fill="#d9d9d9"/>
<rect x="403.50" y="369.60" width="13.40" height="12.50" rx="1" fill="#4080ea"/>
<text x="404.80" y="375.20" font-size="5.4" font-weight="bold" fill="#151515" stroke="#151515" stroke-width="0.2">H</text>
<rect x="420.82" y="367.80" width="17.50" height="17.30" rx="1.8" fill="#f4f4f4"/>
<rect x="421.12" y="368.00" width="16.60" height="16.30" rx="1.6" fill="#d9d9d9"/>
<rect x="422.92" y="369.60" width="13.40" height="12.50" rx="1" fill="#4080ea"/>
<text x="424.22" y="375.20" font-size="5.4" font-weight="bold" fill="#151515" stroke="#151515" stroke-width="0.2">J</text>
<rect x="440.24" y="367.80" width="17.50" height="17.30" rx="1.8" fill="#f4f4f4"/>
<rect x="440.54" y="368.00" width="16.60" height="16.30" rx="1.6" fill="#d9d9d9"/>
<rect x="442.34" y="369.60" width="13.40" height="12.50" rx="1" fill="#33a93b"/>
<text x="443.64" y="375.20" font-size="5.4" font-weight="bold" fill="#151515" stroke="#151515" stroke-width="0.2">K</text>
<rect x="459.66" y="367.80" width="17.50" height="17.30" rx="1.8" fill="#f4f4f4"/>
<rect x="459.96" y="368.00" width="16.60" height="16.30" rx="1.6" fill="#d9d9d9"/>
<rect x="461.76" y="369.60" width="13.40" height="12.50" rx="1" fill="#e271e9"/>
<text x="463.06" y="375.20" font-size="5.4" font-weight="bold" fill="#151515" stroke="#151515" stroke-width="0.2">L</text>
<rect x="479.08" y="367.80" width="17.50" height="17.30" rx="1.8" fill="#f4f4f4"/>
<rect x="479.38" y="368.00" width="16.60" height="16.30" rx="1.6" fill="#d9d9d9"/>
<rect x="481.18" y="369.60" width="13.40" height="12.50" rx="1" fill="#f0952e"/>
<text x="482.78" y="374.80" font-size="5.2" font-weight="bold" fill="#151515" stroke="#151515" stroke-width="0.2">:</text>
<text x="482.78" y="380.20" font-size="5.2" font-weight="bold" fill="#151515" stroke="#151515" stroke-width="0.2">;</text>
<rect x="498.50" y="367.80" width="17.50" height="17.30" rx="1.8" fill="#f4f4f4"/>
<rect x="498.80" y="368.00" width="16.60" height="16.30" rx="1.6" fill="#d9d9d9"/>
<rect x="500.60" y="369.60" width="13.40" height="12.50" rx="1" fill="#f0952e"/>
<text x="502.20" y="374.80" font-size="5.2" font-weight="bold" fill="#151515" stroke="#151515" stroke-width="0.2">"</text>
<text x="502.20" y="380.20" font-size="5.2" font-weight="bold" fill="#151515" stroke="#151515" stroke-width="0.2">'</text>
<rect x="272.80" y="387.00" width="40.40" height="17.30" rx="1.8" fill="#f4f4f4"/>
<rect x="273.10" y="387.20" width="39.50" height="16.30" rx="1.6" fill="#d9d9d9"/>
<rect x="274.90" y="388.80" width="36.30" height="12.50" rx="1" fill="#e5dc28"/>
<path d="M277.90 395.10l3.4-3.2 3.4 3.2h-1.4v2.8h-4v-2.8z" fill="none" stroke="#151515" stroke-width="0.8"/>
<text x="285.90" y="396.40" font-size="4.4" font-weight="bold" fill="#151515" stroke="#151515" stroke-width="0.2">Shift</text>
<rect x="313.90" y="387.00" width="17.50" height="17.30" rx="1.8" fill="#f4f4f4"/>
<rect x="314.20" y="387.20" width="16.60" height="16.30" rx="1.6" fill="#d9d9d9"/>
<rect x="316.00" y="388.80" width="13.40" height="12.50" rx="1" fill="#e5dc28"/>
<text x="317.30" y="394.40" font-size="5.4" font-weight="bold" fill="#151515" stroke="#151515" stroke-width="0.2">Z</text>
<rect x="333.39" y="387.00" width="17.50" height="17.30" rx="1.8" fill="#f4f4f4"/>
<rect x="333.69" y="387.20" width="16.60" height="16.30" rx="1.6" fill="#d9d9d9"/>
<rect x="335.49" y="388.80" width="13.40" height="12.50" rx="1" fill="#e271e9"/>
<text x="336.79" y="394.40" font-size="5.4" font-weight="bold" fill="#151515" stroke="#151515" stroke-width="0.2">X</text>
<rect x="352.88" y="387.00" width="17.50" height="17.30" rx="1.8" fill="#f4f4f4"/>
<rect x="353.18" y="387.20" width="16.60" height="16.30" rx="1.6" fill="#d9d9d9"/>
<rect x="354.98" y="388.80" width="13.40" height="12.50" rx="1" fill="#38ec44"/>
<text x="356.28" y="394.40" font-size="5.4" font-weight="bold" fill="#151515" stroke="#151515" stroke-width="0.2">C</text>
<rect x="372.37" y="387.00" width="17.50" height="17.30" rx="1.8" fill="#f4f4f4"/>
<rect x="372.67" y="387.20" width="16.60" height="16.30" rx="1.6" fill="#d9d9d9"/>
<rect x="374.47" y="388.80" width="13.40" height="12.50" rx="1" fill="#72c8f2"/>
<text x="375.77" y="394.40" font-size="5.4" font-weight="bold" fill="#151515" stroke="#151515" stroke-width="0.2">V</text>
<rect x="391.86" y="387.00" width="17.50" height="17.30" rx="1.8" fill="#f4f4f4"/>
<rect x="392.16" y="387.20" width="16.60" height="16.30" rx="1.6" fill="#d9d9d9"/>
<rect x="393.96" y="388.80" width="13.40" height="12.50" rx="1" fill="#72c8f2"/>
<text x="395.26" y="394.40" font-size="5.4" font-weight="bold" fill="#151515" stroke="#151515" stroke-width="0.2">B</text>
<rect x="411.35" y="387.00" width="17.50" height="17.30" rx="1.8" fill="#f4f4f4"/>
<rect x="411.65" y="387.20" width="16.60" height="16.30" rx="1.6" fill="#d9d9d9"/>
<rect x="413.45" y="388.80" width="13.40" height="12.50" rx="1" fill="#4080ea"/>
<text x="414.75" y="394.40" font-size="5.4" font-weight="bold" fill="#151515" stroke="#151515" stroke-width="0.2">N</text>
<rect x="430.84" y="387.00" width="17.50" height="17.30" rx="1.8" fill="#f4f4f4"/>
<rect x="431.14" y="387.20" width="16.60" height="16.30" rx="1.6" fill="#d9d9d9"/>
<rect x="432.94" y="388.80" width="13.40" height="12.50" rx="1" fill="#4080ea"/>
<text x="434.24" y="394.40" font-size="5.4" font-weight="bold" fill="#151515" stroke="#151515" stroke-width="0.2">M</text>
<rect x="450.33" y="387.00" width="17.50" height="17.30" rx="1.8" fill="#f4f4f4"/>
<rect x="450.63" y="387.20" width="16.60" height="16.30" rx="1.6" fill="#d9d9d9"/>
<rect x="452.43" y="388.80" width="13.40" height="12.50" rx="1" fill="#33a93b"/>
<text x="454.03" y="394.00" font-size="5.2" font-weight="bold" fill="#151515" stroke="#151515" stroke-width="0.2">&lt;</text>
<text x="454.03" y="399.40" font-size="5.2" font-weight="bold" fill="#151515" stroke="#151515" stroke-width="0.2">,</text>
<rect x="469.82" y="387.00" width="17.50" height="17.30" rx="1.8" fill="#f4f4f4"/>
<rect x="470.12" y="387.20" width="16.60" height="16.30" rx="1.6" fill="#d9d9d9"/>
<rect x="471.92" y="388.80" width="13.40" height="12.50" rx="1" fill="#e271e9"/>
<text x="473.52" y="394.00" font-size="5.2" font-weight="bold" fill="#151515" stroke="#151515" stroke-width="0.2">&gt;</text>
<text x="473.52" y="399.40" font-size="5.2" font-weight="bold" fill="#151515" stroke="#151515" stroke-width="0.2">.</text>
<rect x="489.31" y="387.00" width="17.50" height="17.30" rx="1.8" fill="#f4f4f4"/>
<rect x="489.61" y="387.20" width="16.60" height="16.30" rx="1.6" fill="#d9d9d9"/>
<rect x="491.41" y="388.80" width="13.40" height="12.50" rx="1" fill="#f0952e"/>
<text x="493.01" y="394.00" font-size="5.2" font-weight="bold" fill="#151515" stroke="#151515" stroke-width="0.2">?</text>
<text x="493.01" y="399.40" font-size="5.2" font-weight="bold" fill="#151515" stroke="#151515" stroke-width="0.2">/</text>
<rect x="508.40" y="387.00" width="52.80" height="17.30" rx="1.8" fill="#f4f4f4"/>
<rect x="508.70" y="387.20" width="51.90" height="16.30" rx="1.6" fill="#d9d9d9"/>
<rect x="510.50" y="388.80" width="48.70" height="12.50" rx="1" fill="#f0952e"/>
<path d="M513.50 395.10l3.4-3.2 3.4 3.2h-1.4v2.8h-4v-2.8z" fill="none" stroke="#151515" stroke-width="0.8"/>
<text x="521.50" y="396.40" font-size="4.4" font-weight="bold" fill="#151515" stroke="#151515" stroke-width="0.2">Shift</text>
<rect x="272.80" y="406.30" width="27.20" height="17.30" rx="1.8" fill="#f4f4f4"/>
<rect x="273.10" y="406.50" width="26.30" height="16.30" rx="1.6" fill="#d9d9d9"/>
<rect x="274.90" y="408.10" width="23.10" height="12.50" rx="1" fill="#e5dc28"/>
<text x="276.20" y="416.10" font-size="4.4" font-weight="bold" fill="#151515" stroke="#151515" stroke-width="0.2">Ctrl</text>
<rect x="300.70" y="406.30" width="21.30" height="17.30" rx="1.8" fill="#f4f4f4"/>
<rect x="301.00" y="406.50" width="20.40" height="16.30" rx="1.6" fill="#d9d9d9"/>
<rect x="302.80" y="408.10" width="17.20" height="12.50" rx="1" fill="#b24f26"/>
<rect x="302.80" y="408.10" width="10.66" height="12.50" rx="1" fill="#e5dc28"/>
<rect x="306.00" y="413.70" width="1.7" height="1.7" fill="#111"/><rect x="308.00" y="413.70" width="1.7" height="1.7" fill="#111"/><rect x="306.00" y="415.70" width="1.7" height="1.7" fill="#111"/><rect x="308.00" y="415.70" width="1.7" height="1.7" fill="#111"/>
<rect x="323.40" y="406.30" width="22.00" height="17.30" rx="1.8" fill="#f4f4f4"/>
<rect x="323.70" y="406.50" width="21.10" height="16.30" rx="1.6" fill="#d9d9d9"/>
<rect x="325.50" y="408.10" width="17.90" height="12.50" rx="1" fill="#b24f26"/>
<rect x="325.50" y="408.10" width="11.10" height="12.50" rx="1" fill="#e5dc28"/>
<text x="326.80" y="416.10" font-size="4.4" font-weight="bold" fill="#151515" stroke="#151515" stroke-width="0.2">Alt</text>
<rect x="346.90" y="406.30" width="108.10" height="17.30" rx="1.8" fill="#f4f4f4"/>
<rect x="347.20" y="406.50" width="107.20" height="16.30" rx="1.6" fill="#d9d9d9"/>
<rect x="349.00" y="408.10" width="104.00" height="12.50" rx="1" fill="#b9a25f"/>
<rect x="349.00" y="408.10" width="57.20" height="12.50" rx="1" fill="#b24f26"/>
<rect x="456.90" y="406.30" width="24.70" height="17.30" rx="1.8" fill="#f4f4f4"/>
<rect x="457.20" y="406.50" width="23.80" height="16.30" rx="1.6" fill="#d9d9d9"/>
<rect x="459.00" y="408.10" width="20.60" height="12.50" rx="1" fill="#f0952e"/>
<rect x="459.00" y="408.10" width="9.27" height="12.50" rx="1" fill="#b9a25f"/>
<text x="460.30" y="416.10" font-size="4.4" font-weight="bold" fill="#151515" stroke="#151515" stroke-width="0.2">Alt</text>
<rect x="482.70" y="406.30" width="24.70" height="17.30" rx="1.8" fill="#f4f4f4"/>
<rect x="483.00" y="406.50" width="23.80" height="16.30" rx="1.6" fill="#d9d9d9"/>
<rect x="484.80" y="408.10" width="20.60" height="12.50" rx="1" fill="#f0952e"/>
<rect x="488.00" y="413.70" width="1.7" height="1.7" fill="#111"/><rect x="490.00" y="413.70" width="1.7" height="1.7" fill="#111"/><rect x="488.00" y="415.70" width="1.7" height="1.7" fill="#111"/><rect x="490.00" y="415.70" width="1.7" height="1.7" fill="#111"/>
<rect x="508.50" y="406.30" width="24.60" height="17.30" rx="1.8" fill="#f4f4f4"/>
<rect x="508.80" y="406.50" width="23.70" height="16.30" rx="1.6" fill="#d9d9d9"/>
<rect x="510.60" y="408.10" width="20.50" height="12.50" rx="1" fill="#f0952e"/>
<rect x="514.60" y="412.10" width="4" height="5" fill="none" stroke="#111" stroke-width="0.7"/><path d="M515.40 413.60h2.4M515.40 415.10h2.4" stroke="#111" stroke-width="0.5"/><path d="M518.60 415.10l2.5 2.5" stroke="#111" stroke-width="0.7"/>
<rect x="534.20" y="406.30" width="27.00" height="17.30" rx="1.8" fill="#f4f4f4"/>
<rect x="534.50" y="406.50" width="26.10" height="16.30" rx="1.6" fill="#d9d9d9"/>
<rect x="536.30" y="408.10" width="22.90" height="12.50" rx="1" fill="#f0952e"/>
<text x="537.60" y="416.10" font-size="4.4" font-weight="bold" fill="#151515" stroke="#151515" stroke-width="0.2">Ctrl</text>
<rect x="573.20" y="329.50" width="17.40" height="16.90" rx="1.8" fill="#f4f4f4"/>
<rect x="573.50" y="329.70" width="16.50" height="15.90" rx="1.6" fill="#d9d9d9"/>
<rect x="575.30" y="331.30" width="13.30" height="12.10" rx="1" fill="#4080ea"/>
<text x="576.50" y="334.90" font-size="3" fill="#2a2a2a">Insert</text>
<rect x="592.40" y="329.50" width="17.40" height="16.90" rx="1.8" fill="#f4f4f4"/>
<rect x="592.70" y="329.70" width="16.50" height="15.90" rx="1.6" fill="#d9d9d9"/>
<rect x="594.50" y="331.30" width="13.30" height="12.10" rx="1" fill="#33a93b"/>
<text x="595.70" y="334.90" font-size="3" fill="#2a2a2a">Home</text>
<rect x="611.60" y="329.50" width="17.40" height="16.90" rx="1.8" fill="#f4f4f4"/>
<rect x="611.90" y="329.70" width="16.50" height="15.90" rx="1.6" fill="#d9d9d9"/>
<rect x="613.70" y="331.30" width="13.30" height="12.10" rx="1" fill="#e271e9"/>
<text x="614.90" y="334.90" font-size="3" fill="#2a2a2a">Page</text>
<text x="614.90" y="338.10" font-size="3" fill="#2a2a2a">Up</text>
<rect x="573.20" y="348.80" width="17.40" height="16.90" rx="1.8" fill="#f4f4f4"/>
<rect x="573.50" y="349.00" width="16.50" height="15.90" rx="1.6" fill="#d9d9d9"/>
<rect x="575.30" y="350.60" width="13.30" height="12.10" rx="1" fill="#4080ea"/>
<text x="576.50" y="354.20" font-size="3" fill="#2a2a2a">Delete</text>
<rect x="592.40" y="348.80" width="17.40" height="16.90" rx="1.8" fill="#f4f4f4"/>
<rect x="592.70" y="349.00" width="16.50" height="15.90" rx="1.6" fill="#d9d9d9"/>
<rect x="594.50" y="350.60" width="13.30" height="12.10" rx="1" fill="#33a93b"/>
<text x="595.70" y="354.20" font-size="3" fill="#2a2a2a">End</text>
<rect x="611.60" y="348.80" width="17.40" height="16.90" rx="1.8" fill="#f4f4f4"/>
<rect x="611.90" y="349.00" width="16.50" height="15.90" rx="1.6" fill="#d9d9d9"/>
<rect x="613.70" y="350.60" width="13.30" height="12.10" rx="1" fill="#e271e9"/>
<text x="614.90" y="354.20" font-size="3" fill="#2a2a2a">Page</text>
<text x="614.90" y="357.40" font-size="3" fill="#2a2a2a">Down</text>
<rect x="592.40" y="387.30" width="17.40" height="17.00" rx="1.8" fill="#f4f4f4"/>
<rect x="592.70" y="387.50" width="16.50" height="16.00" rx="1.6" fill="#d9d9d9"/>
<rect x="594.50" y="389.10" width="13.30" height="12.20" rx="1" fill="#33a93b"/>
<path d="M601.15 392.20v6M600.15 393.70l1-1.5 1 1.5z" stroke="#151515" stroke-width="0.9" fill="#151515"/>
<rect x="573.20" y="406.60" width="17.40" height="17.00" rx="1.8" fill="#f4f4f4"/>
<rect x="573.50" y="406.80" width="16.50" height="16.00" rx="1.6" fill="#d9d9d9"/>
<rect x="575.30" y="408.40" width="13.30" height="12.20" rx="1" fill="#4080ea"/>
<path d="M578.45 414.50h6M579.95 413.50l-1.5 1 1.5 1z" stroke="#151515" stroke-width="0.9" fill="#151515"/>
<rect x="592.40" y="406.60" width="17.40" height="17.00" rx="1.8" fill="#f4f4f4"/>
<rect x="592.70" y="406.80" width="16.50" height="16.00" rx="1.6" fill="#d9d9d9"/>
<rect x="594.50" y="408.40" width="13.30" height="12.20" rx="1" fill="#33a93b"/>
<path d="M601.15 411.50v6M600.15 416.00l1 1.5 1-1.5z" stroke="#151515" stroke-width="0.9" fill="#151515"/>
<rect x="611.60" y="406.60" width="17.40" height="17.00" rx="1.8" fill="#f4f4f4"/>
<rect x="611.90" y="406.80" width="16.50" height="16.00" rx="1.6" fill="#d9d9d9"/>
<rect x="613.70" y="408.40" width="13.30" height="12.20" rx="1" fill="#e271e9"/>
<path d="M617.35 414.50h6M622.35 413.50l1.5 1-1.5 1z" stroke="#151515" stroke-width="0.9" fill="#151515"/>
<rect x="640.80" y="329.20" width="17.40" height="17.30" rx="1.8" fill="#f4f4f4"/>
<rect x="641.10" y="329.40" width="16.50" height="16.30" rx="1.6" fill="#d9d9d9"/>
<rect x="642.90" y="331.00" width="13.30" height="12.50" rx="1" fill="#4080ea"/>
<text x="644.10" y="334.60" font-size="3" fill="#2a2a2a">Num</text>
<text x="644.10" y="337.80" font-size="3" fill="#2a2a2a">Lock</text>
<rect x="660.10" y="329.20" width="17.40" height="17.30" rx="1.8" fill="#f4f4f4"/>
<rect x="660.40" y="329.40" width="16.50" height="16.30" rx="1.6" fill="#d9d9d9"/>
<rect x="662.20" y="331.00" width="13.30" height="12.50" rx="1" fill="#33a93b"/>
<text x="663.50" y="336.60" font-size="5.4" font-weight="bold" fill="#151515" stroke="#151515" stroke-width="0.2">/</text>
<rect x="679.30" y="329.20" width="17.40" height="17.30" rx="1.8" fill="#f4f4f4"/>
<rect x="679.60" y="329.40" width="16.50" height="16.30" rx="1.6" fill="#d9d9d9"/>
<rect x="681.40" y="331.00" width="13.30" height="12.50" rx="1" fill="#e271e9"/>
<text x="682.70" y="336.60" font-size="5.4" font-weight="bold" fill="#151515" stroke="#151515" stroke-width="0.2">*</text>
<rect x="698.80" y="329.20" width="17.40" height="17.30" rx="1.8" fill="#f4f4f4"/>
<rect x="699.10" y="329.40" width="16.50" height="16.30" rx="1.6" fill="#d9d9d9"/>
<rect x="700.90" y="331.00" width="13.30" height="12.50" rx="1" fill="#f0952e"/>
<text x="702.20" y="337.50" font-size="5.4" font-weight="bold" fill="#151515" stroke="#151515" stroke-width="0.2">–</text>
<rect x="640.80" y="348.50" width="17.40" height="17.30" rx="1.8" fill="#f4f4f4"/>
<rect x="641.10" y="348.70" width="16.50" height="16.30" rx="1.6" fill="#d9d9d9"/>
<rect x="642.90" y="350.30" width="13.30" height="12.50" rx="1" fill="#4080ea"/>
<text x="644.30" y="355.70" font-size="5.4" font-weight="bold" fill="#151515" stroke="#151515" stroke-width="0.2">7</text>
<text x="644.30" y="360.90" font-size="3" fill="#222">Home</text>
<rect x="660.10" y="348.50" width="17.40" height="17.30" rx="1.8" fill="#f4f4f4"/>
<rect x="660.40" y="348.70" width="16.50" height="16.30" rx="1.6" fill="#d9d9d9"/>
<rect x="662.20" y="350.30" width="13.30" height="12.50" rx="1" fill="#33a93b"/>
<text x="663.60" y="355.70" font-size="5.4" font-weight="bold" fill="#151515" stroke="#151515" stroke-width="0.2">8</text>
<text x="663.60" y="360.90" font-size="3" fill="#222">↑</text>
<rect x="679.30" y="348.50" width="17.40" height="17.30" rx="1.8" fill="#f4f4f4"/>
<rect x="679.60" y="348.70" width="16.50" height="16.30" rx="1.6" fill="#d9d9d9"/>
<rect x="681.40" y="350.30" width="13.30" height="12.50" rx="1" fill="#e271e9"/>
<text x="682.80" y="355.70" font-size="5.4" font-weight="bold" fill="#151515" stroke="#151515" stroke-width="0.2">9</text>
<text x="682.80" y="360.90" font-size="3" fill="#222">Pg Up</text>
<rect x="640.80" y="367.80" width="17.40" height="17.30" rx="1.8" fill="#f4f4f4"/>
<rect x="641.10" y="368.00" width="16.50" height="16.30" rx="1.6" fill="#d9d9d9"/>
<rect x="642.90" y="369.60" width="13.30" height="12.50" rx="1" fill="#4080ea"/>
<text x="644.30" y="375.00" font-size="5.4" font-weight="bold" fill="#151515" stroke="#151515" stroke-width="0.2">4</text>
<text x="644.30" y="380.20" font-size="3" fill="#222">←</text>
<rect x="660.10" y="367.80" width="17.40" height="17.30" rx="1.8" fill="#f4f4f4"/>
<rect x="660.40" y="368.00" width="16.50" height="16.30" rx="1.6" fill="#d9d9d9"/>
<rect x="662.20" y="369.60" width="13.30" height="12.50" rx="1" fill="#33a93b"/>
<text x="663.50" y="375.20" font-size="5.4" font-weight="bold" fill="#151515" stroke="#151515" stroke-width="0.2">5</text>
<rect x="679.30" y="367.80" width="17.40" height="17.30" rx="1.8" fill="#f4f4f4"/>
<rect x="679.60" y="368.00" width="16.50" height="16.30" rx="1.6" fill="#d9d9d9"/>
<rect x="681.40" y="369.60" width="13.30" height="12.50" rx="1" fill="#e271e9"/>
<text x="682.80" y="375.00" font-size="5.4" font-weight="bold" fill="#151515" stroke="#151515" stroke-width="0.2">6</text>
<text x="682.80" y="380.20" font-size="3" fill="#222">→</text>
<rect x="640.80" y="387.00" width="17.40" height="17.30" rx="1.8" fill="#f4f4f4"/>
<rect x="641.10" y="387.20" width="16.50" height="16.30" rx="1.6" fill="#d9d9d9"/>
<rect x="642.90" y="388.80" width="13.30" height="12.50" rx="1" fill="#4080ea"/>
<text x="644.30" y="394.20" font-size="5.4" font-weight="bold" fill="#151515" stroke="#151515" stroke-width="0.2">1</text>
<text x="644.30" y="399.40" font-size="3" fill="#222">End</text>
<rect x="660.10" y="387.00" width="17.40" height="17.30" rx="1.8" fill="#f4f4f4"/>
<rect x="660.40" y="387.20" width="16.50" height="16.30" rx="1.6" fill="#d9d9d9"/>
<rect x="662.20" y="388.80" width="13.30" height="12.50" rx="1" fill="#33a93b"/>
<text x="663.60" y="394.20" font-size="5.4" font-weight="bold" fill="#151515" stroke="#151515" stroke-width="0.2">2</text>
<text x="663.60" y="399.40" font-size="3" fill="#222">↓</text>
<rect x="679.30" y="387.00" width="17.40" height="17.30" rx="1.8" fill="#f4f4f4"/>
<rect x="679.60" y="387.20" width="16.50" height="16.30" rx="1.6" fill="#d9d9d9"/>
<rect x="681.40" y="388.80" width="13.30" height="12.50" rx="1" fill="#e271e9"/>
<text x="682.80" y="394.20" font-size="5.4" font-weight="bold" fill="#151515" stroke="#151515" stroke-width="0.2">3</text>
<text x="682.80" y="399.40" font-size="3" fill="#222">Pg Dn</text>
<rect x="679.30" y="406.30" width="17.40" height="17.30" rx="1.8" fill="#f4f4f4"/>
<rect x="679.60" y="406.50" width="16.50" height="16.30" rx="1.6" fill="#d9d9d9"/>
<rect x="681.40" y="408.10" width="13.30" height="12.50" rx="1" fill="#e271e9"/>
<text x="682.80" y="413.50" font-size="5.4" font-weight="bold" fill="#151515" stroke="#151515" stroke-width="0.2">.</text>
<text x="682.80" y="418.70" font-size="3" fill="#222">Del</text>
<rect x="698.80" y="348.50" width="17.40" height="36.60" rx="1.8" fill="#f4f4f4"/>
<rect x="699.10" y="348.70" width="16.50" height="35.60" rx="1.6" fill="#d9d9d9"/>
<rect x="700.90" y="350.30" width="13.30" height="31.80" rx="1" fill="#f0952e"/>
<text x="702.20" y="358.80" font-size="5.4" font-weight="bold" fill="#151515" stroke="#151515" stroke-width="0.2">+</text>
<rect x="698.80" y="387.00" width="17.40" height="36.60" rx="1.8" fill="#f4f4f4"/>
<rect x="699.10" y="387.20" width="16.50" height="35.60" rx="1.6" fill="#d9d9d9"/>
<rect x="700.90" y="388.80" width="13.30" height="31.80" rx="1" fill="#f0952e"/>
<text x="702.20" y="402.30" font-size="4.4" font-weight="bold" fill="#151515" stroke="#151515" stroke-width="0.2">Enter</text>
<rect x="640.80" y="406.30" width="36.70" height="17.30" rx="1.8" fill="#f4f4f4"/>
<rect x="641.10" y="406.50" width="35.80" height="16.30" rx="1.6" fill="#d9d9d9"/>
<rect x="642.90" y="408.10" width="32.60" height="12.50" rx="1" fill="#b9a25f"/>
<text x="644.30" y="413.50" font-size="5.4" font-weight="bold" fill="#151515" stroke="#151515" stroke-width="0.2">0</text>
<text x="644.30" y="418.70" font-size="3" fill="#222">Ins</text>
<rect x="534.2" y="348.5" width="27" height="37.3" rx="1.6" fill="#f4f4f4"/>
<rect x="534.5" y="348.7" width="26.1" height="36.3" rx="1.6" fill="#d9d9d9"/>
<rect x="518.5" y="367.8" width="42.7" height="17.3" rx="1.6" fill="#f4f4f4"/>
<rect x="518.8" y="368.0" width="41.8" height="16.3" rx="1.6" fill="#d9d9d9"/>
<path d="M536.3 350.3h22.9v31.80h-38.6v-12.50h15.7z" fill="#f0952e"/>
<text x="523.5" y="377.0" font-size="4.4" font-weight="bold" fill="#151515" stroke="#151515" stroke-width="0.2">Enter</text>
<path d="M541 375.6h4.5v-2.2M541 375.6l1.5-1.2v2.4z" stroke="#151515" stroke-width="0.8" fill="#151515"/>
<circle cx="315.1" cy="433" r="5.7" fill="#f2ec70" stroke="#151515" stroke-width="1.3"/>
<text x="315.1" y="436.3" font-size="9" font-weight="bold" text-anchor="middle" fill="#111" stroke="#111" stroke-width="0.35">5</text>
<circle cx="331.7" cy="433" r="5.7" fill="#f29df2" stroke="#151515" stroke-width="1.3"/>
<text x="331.7" y="436.3" font-size="9" font-weight="bold" text-anchor="middle" fill="#111" stroke="#111" stroke-width="0.35">4</text>
<circle cx="348.1" cy="433" r="5.7" fill="#95ea95" stroke="#151515" stroke-width="1.3"/>
<text x="348.1" y="436.3" font-size="9" font-weight="bold" text-anchor="middle" fill="#111" stroke="#111" stroke-width="0.35">3</text>
<circle cx="364.7" cy="433" r="5.7" fill="#9fd8f4" stroke="#151515" stroke-width="1.3"/>
<text x="364.7" y="436.3" font-size="9" font-weight="bold" text-anchor="middle" fill="#111" stroke="#111" stroke-width="0.35">2</text>
<circle cx="381.2" cy="433" r="5.7" fill="#b24f26" stroke="#151515" stroke-width="1.3"/>
<text x="381.2" y="436.3" font-size="9" font-weight="bold" text-anchor="middle" fill="#111" stroke="#111" stroke-width="0.35">1</text>
<circle cx="428.6" cy="433" r="5.7" fill="#e6d79f" stroke="#151515" stroke-width="1.3"/>
<text x="428.6" y="436.3" font-size="9" font-weight="bold" text-anchor="middle" fill="#111" stroke="#111" stroke-width="0.35">1</text>
<circle cx="445.2" cy="433" r="5.7" fill="#8eb2f2" stroke="#151515" stroke-width="1.3"/>
<text x="445.2" y="436.3" font-size="9" font-weight="bold" text-anchor="middle" fill="#111" stroke="#111" stroke-width="0.35">2</text>
<circle cx="461.9" cy="433" r="5.7" fill="#95ea95" stroke="#151515" stroke-width="1.3"/>
<text x="461.9" y="436.3" font-size="9" font-weight="bold" text-anchor="middle" fill="#111" stroke="#111" stroke-width="0.35">3</text>
<circle cx="478.2" cy="433" r="5.7" fill="#ee8eee" stroke="#151515" stroke-width="1.3"/>
<text x="478.2" y="436.3" font-size="9" font-weight="bold" text-anchor="middle" fill="#111" stroke="#111" stroke-width="0.35">4</text>
<circle cx="494.8" cy="433" r="5.7" fill="#f6bd78" stroke="#151515" stroke-width="1.3"/>
<text x="494.8" y="436.3" font-size="9" font-weight="bold" text-anchor="middle" fill="#111" stroke="#111" stroke-width="0.35">5</text>
<circle cx="646.5" cy="433" r="5.7" fill="#e6d79f" stroke="#151515" stroke-width="1.3"/>
<text x="646.5" y="436.3" font-size="9" font-weight="bold" text-anchor="middle" fill="#111" stroke="#111" stroke-width="0.35">1</text>
<circle cx="663.1" cy="433" r="5.7" fill="#8eb2f2" stroke="#151515" stroke-width="1.3"/>
<text x="663.1" y="436.3" font-size="9" font-weight="bold" text-anchor="middle" fill="#111" stroke="#111" stroke-width="0.35">2</text>
<circle cx="679.8" cy="433" r="5.7" fill="#95ea95" stroke="#151515" stroke-width="1.3"/>
<text x="679.8" y="436.3" font-size="9" font-weight="bold" text-anchor="middle" fill="#111" stroke="#111" stroke-width="0.35">3</text>
<circle cx="696.4" cy="433" r="5.7" fill="#ee8eee" stroke="#151515" stroke-width="1.3"/>
<text x="696.4" y="436.3" font-size="9" font-weight="bold" text-anchor="middle" fill="#111" stroke="#111" stroke-width="0.35">4</text>
<circle cx="713.0" cy="433" r="5.7" fill="#f6bd78" stroke="#151515" stroke-width="1.3"/>
<text x="713.0" y="436.3" font-size="9" font-weight="bold" text-anchor="middle" fill="#111" stroke="#111" stroke-width="0.35">5</text>
</svg>
  </div>
  <div id="sb" class="a"><div id="thumb" class="a"></div><svg class="a" style="left:1.5px;top:13px" width="11" height="8" viewBox="0 0 11 8"><path d="M1.2 6.5L5.5 2.2L9.8 6.5" fill="none" stroke="#3c3c3c" stroke-width="1.8"/></svg><svg class="a" style="left:1.5px;top:540.5px" width="11" height="8" viewBox="0 0 11 8"><path d="M1.2 1.5L5.5 5.8L9.8 1.5" fill="none" stroke="#3c3c3c" stroke-width="1.8"/></svg></div>
</div>
</body></html>
